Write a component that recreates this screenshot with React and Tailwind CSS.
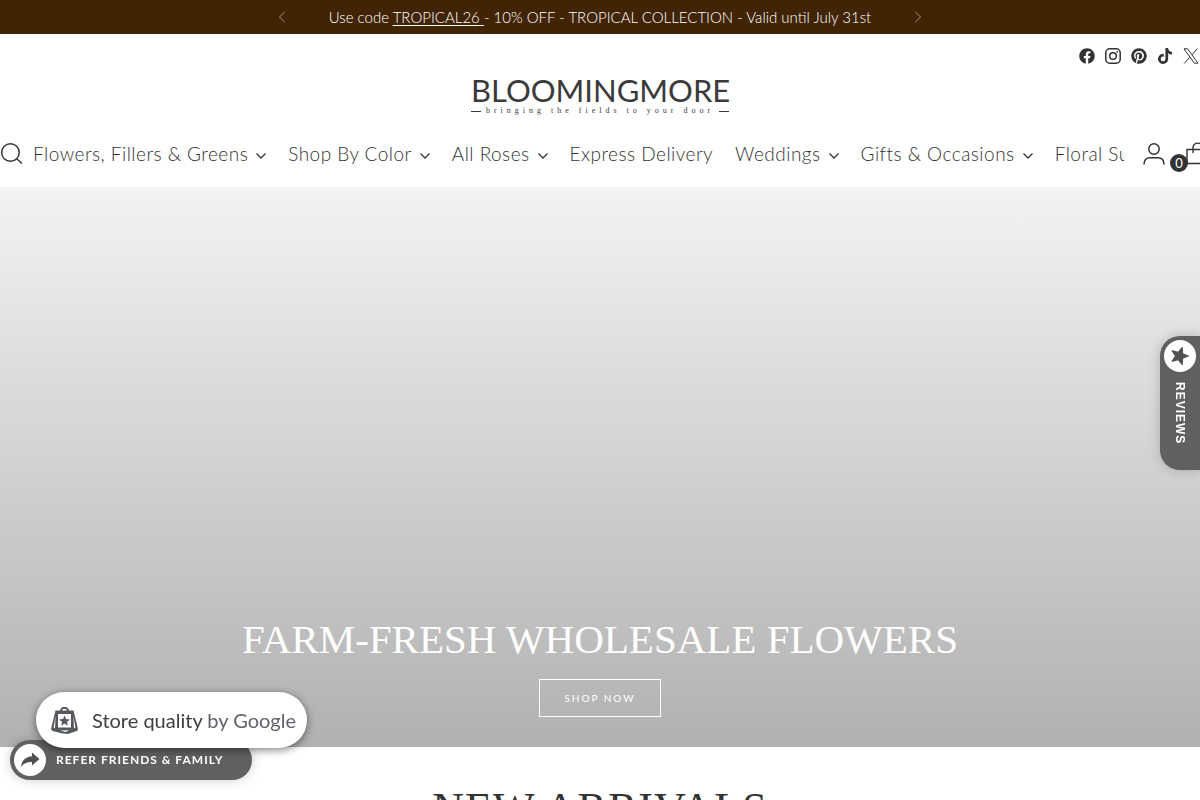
import { useState } from "react";
import { FaFacebook, FaPinterest, FaTiktok } from "react-icons/fa";
import { ChevronLeft, ChevronRight } from "lucide-react";

const menu = [
  { label: "Flowers, Fillers & Greens", dropdown: true },
  { label: "Shop By Color", dropdown: true },
  { label: "All Roses", dropdown: true },
  { label: "Express Delivery", dropdown: false },
  { label: "Weddings", dropdown: true },
  { label: "Gifts & Occasions", dropdown: true },
  { label: "Floral Supplies", dropdown: true },
];

function InstagramIcon() {
  return (
    <svg viewBox="0 0 16 16" className="size-4" fill="none" stroke="currentColor" strokeWidth="1.5">
      <rect x="0.8" y="0.8" width="14.4" height="14.4" rx="4" />
      <circle cx="8" cy="8" r="3.3" />
      <circle cx="12.2" cy="3.8" r="0.9" fill="currentColor" stroke="none" />
    </svg>
  );
}

function XIcon() {
  return (
    <svg viewBox="0 0 16 16" className="size-4" fill="none" stroke="currentColor" strokeWidth="1">
      <path d="M1 0.8h3.6L15 15.2h-3.6z" />
      <path d="M14.4 0.5 9 6.8M6.8 9.2 1.2 15.5" />
    </svg>
  );
}

const socials = [
  { name: "Facebook", icon: <FaFacebook className="size-4" /> },
  { name: "Instagram", icon: <InstagramIcon /> },
  { name: "Pinterest", icon: <FaPinterest className="size-4" /> },
  { name: "TikTok", icon: <FaTiktok className="size-4" /> },
  { name: "X", icon: <XIcon /> },
];

function AnnouncementBar() {
  return (
    <div className="flex h-[34px] items-center justify-center bg-[#412404] text-white">
      <button type="button" aria-label="Previous" className="text-white/60">
        <ChevronLeft className="size-5" strokeWidth={1} />
      </button>
      <p className="w-[616px] text-center text-[15px] leading-5 font-light">
        Use code{" "}
        <a href="#tropical" className="underline underline-offset-2">
          TROPICAL26{" "}
        </a>
        - 10% OFF - TROPICAL COLLECTION - Valid until July 31st
      </p>
      <button type="button" aria-label="Next" className="text-white/60">
        <ChevronRight className="size-5" strokeWidth={1} />
      </button>
    </div>
  );
}

function Logo() {
  return (
    <a href="#home" className="flex w-[258px] flex-col gap-[3px] text-[#3a3a3a]">
      <span className="text-center text-[31px] leading-7 whitespace-nowrap">BLOOMINGMORE</span>
      <span className="flex items-center justify-between">
        <span className="h-px w-2.5 bg-[#3a3a3a]" />
        <span className="font-['Liberation_Serif',serif] text-[8px] leading-2 tracking-[4px] whitespace-nowrap">
          bringing the fields to your door
        </span>
        <span className="h-px w-2.5 bg-[#3a3a3a]" />
      </span>
    </a>
  );
}

function Header() {
  const [cartCount] = useState(0);

  return (
    <header className="bg-white">
      <div className="mr-px flex h-[42px] items-center justify-end gap-2.5 pt-0.5 text-[#333333]">
        {socials.map((s) => (
          <a key={s.name} href={"#" + s.name} aria-label={s.name}>
            {s.icon}
          </a>
        ))}
      </div>

      <div className="flex h-11 items-start justify-center">
        <Logo />
      </div>

      <div className="flex h-[67px] items-center text-[#333333]">
        <button type="button" aria-label="Search" className="mr-2.5 shrink-0">
          <svg viewBox="0 0 22 22" className="size-[23px]" fill="none" stroke="currentColor" strokeWidth="1.4">
            <circle cx="10" cy="10" r="8.4" />
            <path d="m16 16 5 4.500" />
          </svg>
        </button>

        <nav className="min-w-0 flex-1 overflow-hidden">
          <ul className="flex gap-[22px]">
            {menu.map((item) => (
              <li key={item.label} className="shrink-0">
                <a
                  href="#menu"
                  className="flex items-center gap-2 text-[19px] leading-7 font-light tracking-wide whitespace-nowrap"
                >
                  {item.label}
                  {item.dropdown && (
                    <svg viewBox="0 0 10 6" className="mt-1 h-1.5 w-2.5" fill="none" stroke="currentColor" strokeWidth="1.3">
                      <path d="m0.500 0.500 4.500 4.500 4.500-4.500" />
                    </svg>
                  )}
                </a>
              </li>
            ))}
          </ul>
        </nav>

        <div className="-mr-2.5 ml-4 flex shrink-0 items-center gap-[18px]">
          <a href="#account" aria-label="Account" className="px-0.5">
            <svg viewBox="0 0 24 24" className="size-6" fill="none" stroke="currentColor" strokeWidth="1.5">
              <circle cx="12" cy="7" r="5.2" />
              <path d="M2 22.500C2 18 4 15.700 8 15.700h8c4 0 6 2.300 6 6.800" />
            </svg>
          </a>
          <a href="#cart" aria-label="Cart" className="relative">
            <svg viewBox="0 0 24 24" className="size-6" fill="none" stroke="currentColor" strokeWidth="1.4">
              <path d="M1 7.500h22v14H1zM7 11V6c0-6.500 10-6.500 10 0v5" />
            </svg>
            <span className="absolute top-3 -left-4 flex size-[18px] items-center justify-center rounded-full bg-[#333333] text-[13px] leading-4 text-white">
              {cartCount}
            </span>
          </a>
        </div>
      </div>
    </header>
  );
}

function Hero() {
  return (
    <section className="flex h-[70vh] flex-col items-center justify-end bg-linear-to-b from-[#f3f3f3] to-[#b1b1b1] pb-[30px] text-white">
      <h1 className="mb-4 text-center font-['Liberation_Serif',serif] text-[41px] leading-12">
        FARM-FRESH WHOLESALE FLOWERS
      </h1>
      <a
        href="#shop"
        className="flex h-[38px] items-center border border-white px-6 text-[10px] leading-4 tracking-[2px]"
      >
        SHOP NOW
      </a>
    </section>
  );
}

function ReviewsTab() {
  return (
    <button
      type="button"
      className="fixed top-[336px] right-0 flex h-[134px] w-10 flex-col items-center gap-2.5 rounded-l-[20px] bg-[#606060] pt-1 text-white shadow-[0_0_12px_rgba(0,0,0,0.2)]"
    >
      <span className="flex size-8 items-center justify-center rounded-full bg-white text-[#505050]">
        <svg viewBox="0 0 24 24" className="size-5 rotate-90" fill="currentColor" stroke="currentColor" strokeWidth="1.5" strokeLinejoin="round">
          <path d="m12 2 2.700 6.900 7.300.5-5.700 4.700 1.900 7.200-6.200-4-6.200 4 1.900-7.200L2 9.400l7.300-.5z" />
        </svg>
      </span>
      <span className="font-['Liberation_Sans',sans-serif] text-xs leading-4 font-bold tracking-[1px] [writing-mode:vertical-rl]">
        REVIEWS
      </span>
    </button>
  );
}

function ReferButton() {
  return (
    <button
      type="button"
      className="fixed bottom-5 left-2.5 flex h-10 w-[242px] items-center gap-2.5 rounded-full bg-[#606060] pl-1 text-white shadow-[0_0_12px_rgba(0,0,0,0.2)]"
    >
      <span className="flex size-8 items-center justify-center rounded-full bg-white text-[#505050]">
        <svg viewBox="0 0 20 16" className="h-4 w-5" fill="currentColor">
          <path d="M12 0.500 19.500 7 12 13.500V10C7 9.800 3.500 11.500 1 15 1.500 9 5.500 4.500 12 4.200z" />
        </svg>
      </span>
      <span className="text-xs leading-4 font-bold tracking-[1px] whitespace-nowrap">
        REFER FRIENDS &amp; FAMILY
      </span>
    </button>
  );
}

function StoreQualityBadge() {
  return (
    <a
      href="#store-quality"
      className="fixed bottom-[52px] left-9 flex h-14 w-[271px] items-center gap-3.5 rounded-full bg-white pl-[15px] text-[#3c4043] shadow-[0_2px_8px_rgba(0,0,0,0.5)]"
    >
      <svg viewBox="0 0 27 27" className="size-[27px] shrink-0">
        <path d="M10 5V3.800a3.500 3 0 0 1 7 0V5" fill="none" stroke="#55585c" strokeWidth="2" />
        <path
          d="M4.500 3.500h18L27 22l-1 2-9.500 3-6-.8L1.500 24 0 22z"
          fill="#55585c"
        />
        <path d="M7 7h13v13.500H7z" fill="#fff" />
        <path d="M4.600 9 2.600 20.500 4 21.500zM22.400 9l2 11.500-1.400 1zM9 23.500l9-.3-3 1.800z" fill="#fff" />
        <path
          d="m13.500 8.500 1.500 3.600 3.900.3-3 2.500 1 3.800-3.400-2.100-3.400 2.100 1-3.800-3-2.500 3.900-.3z"
          fill="#55585c"
        />
      </svg>
      <span className="text-[20px] leading-6 whitespace-nowrap">
        Store quality <span className="text-[#5f6368]">by Google</span>
      </span>
    </a>
  );
}

function App() {
  return (
    <div className="min-h-screen overflow-x-clip bg-white font-['Lato',sans-serif]">
      <AnnouncementBar />
      <Header />
      <main>
        <Hero />
        <section className="pt-[38px] pb-10">
          <h2 className="text-center font-['Liberation_Serif',serif] text-[44px] leading-12 tracking-wide text-[#333333]">
            NEW ARRIVALS
          </h2>
        </section>
      </main>
      <ReviewsTab />
      <ReferButton />
      <StoreQualityBadge />
    </div>
  );
}

export default App;
